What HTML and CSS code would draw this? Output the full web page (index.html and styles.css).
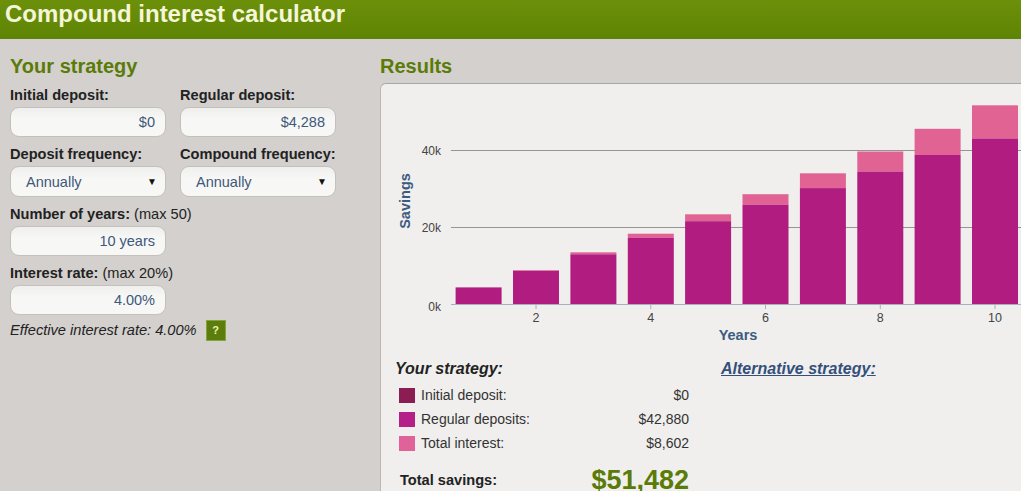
FILE: index.html
```html
<!DOCTYPE html>
<html lang="en">
<head>
<meta charset="utf-8">
<title>Compound interest calculator</title>
<link rel="stylesheet" href="styles.css">
</head>
<body>
<header class="topbar">
  <h1 class="title">Compound interest calculator</h1>
</header>
<main class="layout">
  <section class="strategy">
    <h2 class="section-title">Your strategy</h2>
    <div class="field-grid">
      <div class="field">
        <div class="label">Initial deposit:</div>
        <div class="input">$0</div>
      </div>
      <div class="field">
        <div class="label">Regular deposit:</div>
        <div class="input">$4,288</div>
      </div>
      <div class="field">
        <div class="label">Deposit frequency:</div>
        <div class="select"><span>Annually</span><span class="arrow">▼</span></div>
      </div>
      <div class="field">
        <div class="label">Compound frequency:</div>
        <div class="select"><span>Annually</span><span class="arrow">▼</span></div>
      </div>
      <div class="field first-col">
        <div class="label">Number of years: <span class="hint">(max 50)</span></div>
        <div class="input">10 years</div>
      </div>
      <div class="field first-col">
        <div class="label">Interest rate: <span class="hint">(max 20%)</span></div>
        <div class="input">4.00%</div>
      </div>
    </div>
    <p class="effective">Effective interest rate: 4.00% <span class="help">?</span></p>
  </section>

  <section class="results">
    <h2 class="section-title">Results</h2>
    <div class="panel">
      <svg class="chart" width="660" height="275" viewBox="0 0 660 275">
        <g class="grid">
          <line x1="70" y1="66.5" x2="660" y2="66.5"/>
          <line x1="70" y1="143.5" x2="660" y2="143.5"/>
        </g>
        <g class="bars">
          <rect class="dep" x="74.6" y="203.4" width="46" height="16.6"/>
          <rect class="int" x="132" y="186.2" width="46" height="0.7"/>
          <rect class="dep" x="132" y="186.9" width="46" height="33.1"/>
          <rect class="int" x="189.4" y="168.3" width="46" height="2"/>
          <rect class="dep" x="189.4" y="170.3" width="46" height="49.7"/>
          <rect class="int" x="246.8" y="149.7" width="46" height="4.1"/>
          <rect class="dep" x="246.8" y="153.8" width="46" height="66.2"/>
          <rect class="int" x="304.1" y="130.3" width="46" height="6.9"/>
          <rect class="dep" x="304.1" y="137.2" width="46" height="82.8"/>
          <rect class="int" x="361.5" y="110.2" width="46" height="10.5"/>
          <rect class="dep" x="361.5" y="120.7" width="46" height="99.3"/>
          <rect class="int" x="418.9" y="89.3" width="46" height="14.8"/>
          <rect class="dep" x="418.9" y="104.1" width="46" height="115.9"/>
          <rect class="int" x="476.3" y="67.5" width="46" height="20.1"/>
          <rect class="dep" x="476.3" y="87.6" width="46" height="132.4"/>
          <rect class="int" x="533.6" y="44.8" width="46" height="26.2"/>
          <rect class="dep" x="533.6" y="71" width="46" height="149"/>
          <rect class="int" x="591" y="21.3" width="46" height="33.2"/>
          <rect class="dep" x="591" y="54.5" width="46" height="165.5"/>
        </g>
        <line class="baseline" x1="70" y1="220.5" x2="660" y2="220.5"/>
        <g class="ticks">
          <line x1="155" y1="221" x2="155" y2="225"/>
          <line x1="269.8" y1="221" x2="269.8" y2="225"/>
          <line x1="384.5" y1="221" x2="384.5" y2="225"/>
          <line x1="499.3" y1="221" x2="499.3" y2="225"/>
          <line x1="614" y1="221" x2="614" y2="225"/>
        </g>
        <g class="ylabels">
          <text x="60" y="71">40k</text>
          <text x="60" y="148">20k</text>
          <text x="60" y="227">0k</text>
        </g>
        <g class="xlabels">
          <text x="155" y="238">2</text>
          <text x="269.8" y="238">4</text>
          <text x="384.5" y="238">6</text>
          <text x="499.3" y="238">8</text>
          <text x="614" y="238">10</text>
        </g>
        <text class="axis-title" x="357" y="256">Years</text>
        <text class="axis-title" transform="translate(29 117) rotate(-90)">Savings</text>
      </svg>

      <div class="summary">
        <div class="mine">
          <div class="sum-title">Your strategy:</div>
          <div class="row"><span class="swatch sw-initial"></span><span class="row-label">Initial deposit:</span><span class="row-value">$0</span></div>
          <div class="row"><span class="swatch sw-regular"></span><span class="row-label">Regular deposits:</span><span class="row-value">$42,880</span></div>
          <div class="row"><span class="swatch sw-interest"></span><span class="row-label">Total interest:</span><span class="row-value">$8,602</span></div>
          <div class="total"><span class="total-label">Total savings:</span><span class="total-value">$51,482</span></div>
        </div>
        <div class="alt">
          <a class="alt-link" href="#">Alternative strategy:</a>
        </div>
      </div>
    </div>
  </section>
</main>
</body>
</html>
```

FILE: styles.css
```css
html, body {
  margin: 0;
  padding: 0;
  overflow: hidden;
}

body {
  background: #d3d0cd;
  font-family: "Liberation Sans", Arial, sans-serif;
  color: #222;
  width: 1021px;
  height: 491px;
}

.topbar {
  height: 39px;
  background: linear-gradient(#6c900a, #5e8404);
  box-sizing: border-box;
  padding-left: 5px;
}

.title {
  margin: 0;
  font-size: 24px;
  line-height: 27px;
  font-weight: bold;
  color: #f5f5d8;
}

.layout {
  display: flex;
}

.strategy {
  width: 380px;
  flex: none;
  padding-left: 10px;
  box-sizing: border-box;
}

.section-title {
  margin: 16px 0 0;
  font-size: 20px;
  line-height: 22px;
  font-weight: bold;
  color: #5b7b08;
}

.field-grid {
  margin-top: 9px;
  display: grid;
  grid-template-columns: 156px 156px;
  column-gap: 14px;
  row-gap: 8px;
}

.first-col {
  grid-column: 1;
}

.label {
  font-size: 14.6px;
  line-height: 18px;
  font-weight: bold;
  color: #222;
  white-space: nowrap;
}

.hint {
  font-weight: normal;
}

.input, .select {
  margin-top: 3px;
  height: 30px;
  box-sizing: border-box;
  border: 1px solid #c4c1bd;
  border-radius: 9px;
  background: linear-gradient(#efefed, #f7f7f6 40%);
  font-size: 14.5px;
  color: #40587a;
  display: flex;
  align-items: center;
}

.input {
  justify-content: flex-end;
  padding-right: 10px;
}

.select {
  justify-content: space-between;
  padding: 0 8px 0 15px;
  height: 31px;
}

.arrow {
  font-size: 10px;
  color: #111;
}

.effective {
  margin: 5px 0 0;
  font-size: 14.6px;
  line-height: 21px;
  font-style: italic;
  color: #222;
  display: flex;
  align-items: center;
}

.help {
  margin-left: 9px;
  width: 20px;
  height: 21px;
  box-sizing: border-box;
  background: #5a7d0e;
  border: 1px solid #86a43a;
  color: #eef3a8;
  font-style: normal;
  font-weight: bold;
  font-size: 11px;
  display: flex;
  align-items: center;
  justify-content: center;
}

.results {
  flex: 1;
  min-width: 0;
}

.panel {
  margin-top: 6px;
  width: 680px;
  height: 420px;
  background: #f0efee;
  border-top: 1px solid #a9a7a4;
  border-left: 1px solid #bbb9b6;
  border-top-left-radius: 6px;
}

.chart {
  display: block;
}

.grid line {
  stroke: #959595;
  stroke-width: 1;
}

.baseline {
  stroke: #a8b0be;
  stroke-width: 1;
}

.ticks line {
  stroke: #b0b0b0;
  stroke-width: 1;
}

.dep {
  fill: #b01c7f;
}

.int {
  fill: #e06394;
}

.ylabels text {
  font-size: 12px;
  fill: #444;
  text-anchor: end;
}

.xlabels text {
  font-size: 12.5px;
  fill: #444;
  text-anchor: middle;
}

.axis-title {
  font-size: 14.5px;
  font-weight: bold;
  fill: #3d5a80;
  text-anchor: middle;
}

.summary {
  display: flex;
  padding-left: 14px;
  gap: 32px;
}

.mine {
  width: 294px;
}

.sum-title {
  font-size: 16px;
  line-height: 20px;
  font-weight: bold;
  font-style: italic;
  color: #222;
  margin-bottom: 4px;
}

.row {
  display: flex;
  align-items: center;
  height: 24px;
  padding-left: 4px;
  font-size: 14px;
  color: #333;
}

.swatch {
  width: 16px;
  height: 15px;
  margin-right: 6px;
  flex: none;
}

.sw-initial { background: #8b1d52; }
.sw-regular { background: #b51f88; }
.sw-interest { background: #e0629a; }

.row-label {
  flex: 1;
}

.row-value {
  text-align: right;
}

.total {
  margin-top: 8px;
  height: 34px;
  display: flex;
  align-items: center;
  justify-content: space-between;
  padding-left: 5px;
}

.total-label {
  font-size: 14.6px;
  font-weight: bold;
  color: #222;
}

.total-value {
  font-size: 27px;
  font-weight: bold;
  color: #5b7b08;
}

.alt-link {
  display: block;
  font-size: 16px;
  line-height: 20px;
  font-weight: bold;
  font-style: italic;
  color: #34507a;
  text-decoration: underline;
}
```
